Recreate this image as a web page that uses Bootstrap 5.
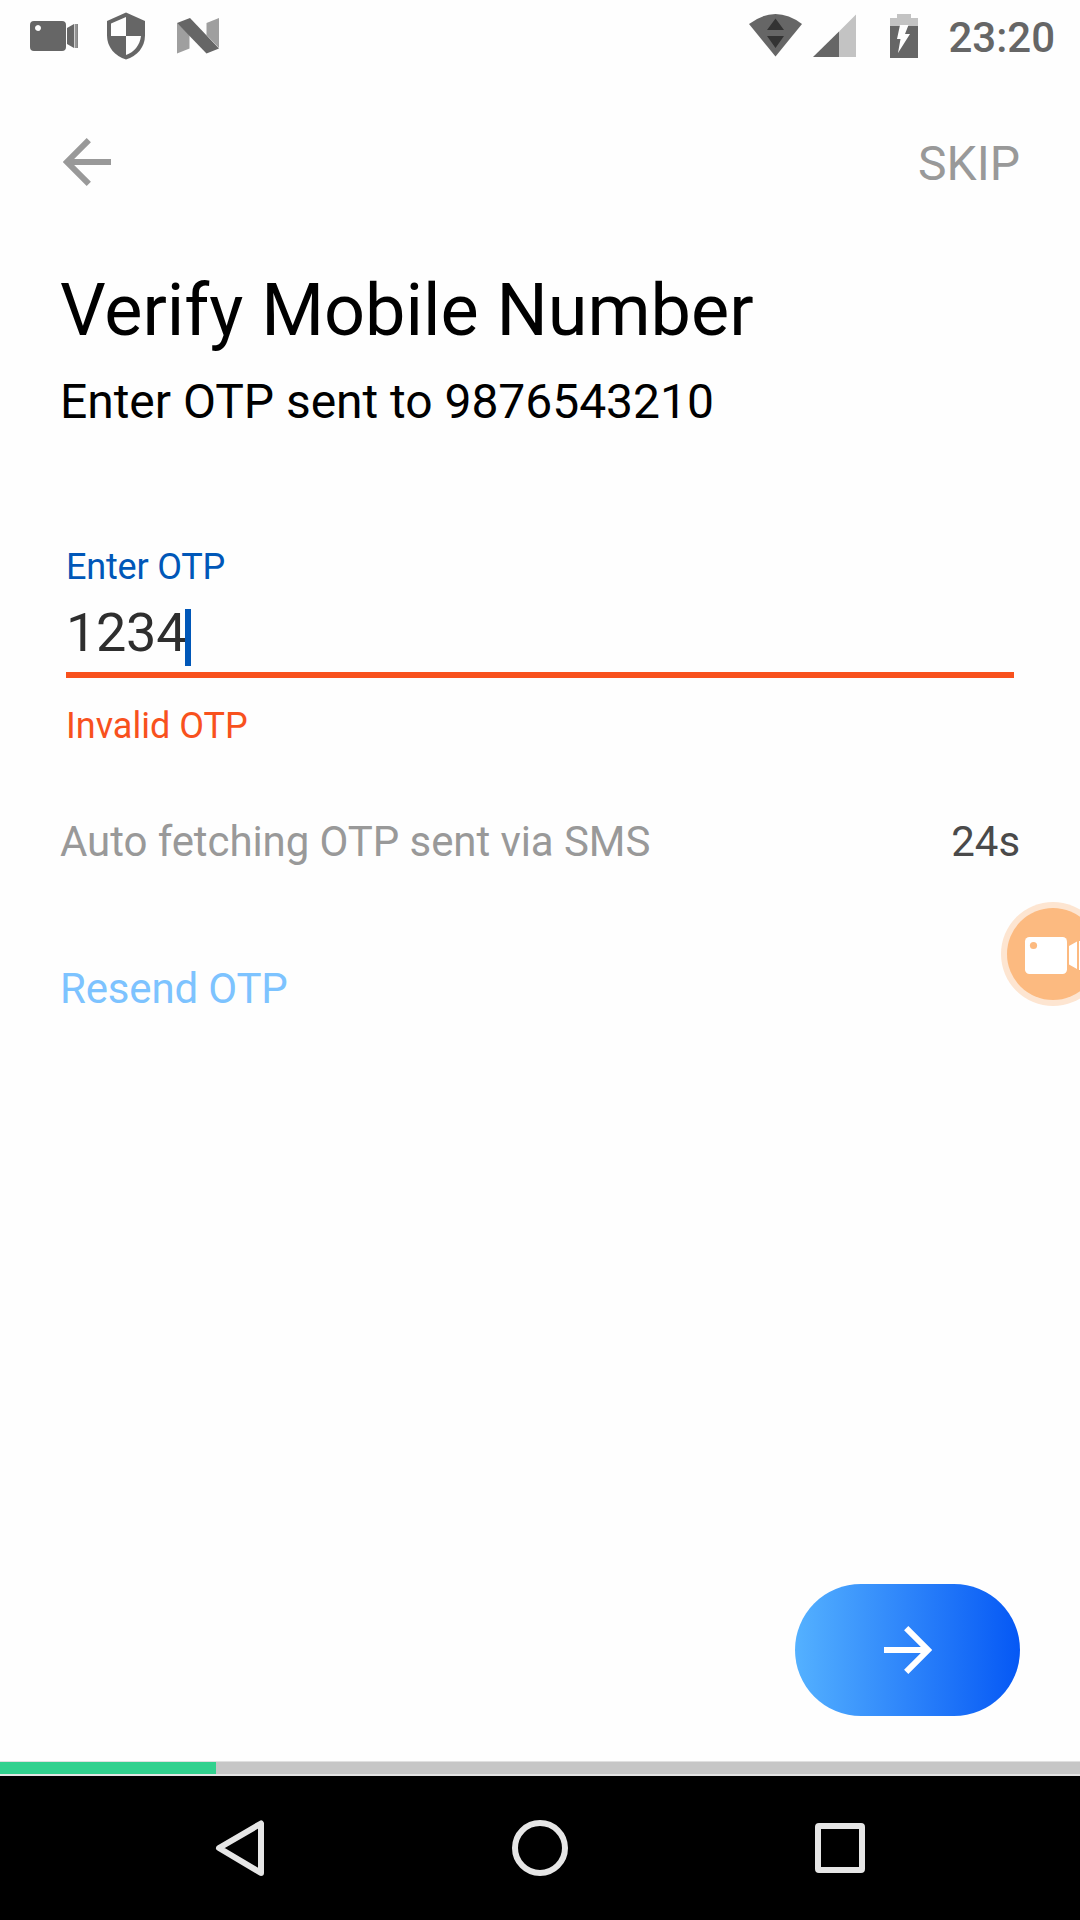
<!DOCTYPE html>
<html lang="en">
<head>
<meta charset="utf-8">
<meta name="viewport" content="width=device-width, initial-scale=1">
<title>Verify Mobile Number</title>
<link href="https://cdn.jsdelivr.net/npm/bootstrap@5.3.0/dist/css/bootstrap.min.css" rel="stylesheet">
<style>
  body { font-family: Roboto, "Noto Sans", sans-serif; background: #fefefe; color: #000; }
  svg { display: block; flex: none; }
  .screen { height: 1920px; }
  .status-bar { height: 72px; padding: 0 25px 0 30px; color: #666; }
  .status-left { gap: 28px; }
  .icon-n { margin-left: 4px; }
  .status-signal { margin-left: 10px; }
  .status-battery { margin-left: 34px; }
  .clock { font-size: 42px; line-height: 50px; font-weight: 500; margin-left: 30px; margin-top: 13px; }
  .content-pad { padding-left: 60px; padding-right: 60px; }
  .toolbar { height: 180px; color: #999; }
  .toolbar .btn { --bs-btn-padding-x: 0; --bs-btn-padding-y: 0; --bs-btn-border-width: 0; --bs-btn-color: #999; }
  .back-btn { margin-top: 66px; margin-left: 3px; height: 48px; }
  .toolbar .skip-btn { font-size: 48px; line-height: 56px; margin-top: 64px; }
  .heading { font-size: 72px; line-height: 84px; margin-top: 17px; font-weight: 400; letter-spacing: -.02px; }
  .subheading { font-size: 48px; line-height: 56px; margin-top: 21px; letter-spacing: -.04px; }
  .otp-field { margin: 116px 6px 0; }
  .otp-label { font-size: 36px; line-height: 42px; color: #0057b8; letter-spacing: -.2px; }
  .otp-value { height: 90px; border-bottom: 6px solid #f8511d; font-size: 54px; line-height: 64px; letter-spacing: -.3px; color: #2e2e2e; }
  .otp-digits { padding-top: 13px; }
  .otp-caret { width: 6px; height: 57px; background: #0057b8; margin-top: 21px; margin-left: -1px; }
  .otp-error { font-size: 36px; line-height: 42px; color: #f8511d; margin-top: 27px; }
  .fetch-row { font-size: 42px; line-height: 50px; margin-top: 70px; color: #999; letter-spacing: -.08px; }
  .timer { color: #4a4a4a; }
  .resend { font-size: 42px; line-height: 50px; margin-top: 97px; color: #7dc3ff; letter-spacing: -.16px; }
  .next-btn { width: 225px; height: 132px; margin-bottom: 45px; background: linear-gradient(90deg, #54b1ff 0%, #2d84fa 50%, #0558f5 100%); }
  .step-progress { height: 15px; border-radius: 0; border-top: 1px solid #e0e0e0; border-bottom: 2px solid #e4e4e4; background: #c6c6c6; }
  .step-progress .progress-bar { background: #31d18e; }
  .nav-keys { height: 144px; gap: 240px; }
  .recorder { width: 104px; height: 104px; left: 1001px; top: 902px; border-radius: 50%; }
</style>
</head>
<body>
<div class="screen d-flex flex-column position-relative overflow-hidden">

  <header class="status-bar d-flex justify-content-between">
    <div class="status-left d-flex">
      <svg width="49" height="72" viewBox="30 0 49 72" fill="#666">
        <path fill-rule="evenodd" d="M34 21h28a4 4 0 0 1 4 4v22a4 4 0 0 1-4 4H34a4 4 0 0 1-4-4V25a4 4 0 0 1 4-4zm4 4a3 3 0 1 0 .01 0z"/>
        <path d="M67 28l7-4v24l-7-4zM74.700 24h1v24h-1zM76.300 24h1.500v24h-1.500z"/>
      </svg>
      <svg width="38" height="72" viewBox="107 0 38 72">
        <path fill="#666" d="M126 12.500l19 8.500v14.500c0 11.500-8 21-19 24-11-3-19-12.500-19-24V21z"/>
        <path fill="#fefefe" d="M126 17v19h-15V23.500zM126 36h15c-1 9-7 16.500-15 19z"/>
      </svg>
      <svg class="icon-n" width="42" height="72" viewBox="177 0 42 72">
        <path fill="#9f9f9f" d="M177 23l12.500 12v13.500L177 53.500zM206.500 23L219 18v30l-12.500-13z"/>
        <path fill="#666" d="M177 23l13-5 29 30.500-12.500 5z"/>
      </svg>
    </div>
    <div class="d-flex">
      <svg width="54" height="72" viewBox="749 0 54 72">
        <path fill="#666" d="M749 24q26.500-20 53 0L775.500 56.500z"/>
        <path fill="#333" d="M775.500 18.500l8.500 11.500h-17zM767 36h17l-8.500 12z"/>
      </svg>
      <svg class="status-signal" width="43" height="72" viewBox="813 0 43 72">
        <path fill="#c3c3c3" d="M856 14.500V57h-17V31.500z"/>
        <path fill="#666" d="M839 31.500V57h-26z"/>
      </svg>
      <svg class="status-battery" width="28" height="72" viewBox="890 0 28 72">
        <path fill="#c3c3c3" d="M897 14h14v4h7v8h-28v-8h7z"/>
        <path fill="#666" d="M890 26h28v32h-28z"/>
        <path fill="#fefefe" d="M900 25h8.500l-3.500 9h5L898 53l2.500-14h-3.500z"/>
      </svg>
      <span class="clock">23:20</span>
    </div>
  </header>

  <main class="content-pad d-flex flex-column flex-grow-1">
    <div class="toolbar d-flex justify-content-between align-items-start">
      <button type="button" class="btn back-btn" aria-label="Back">
        <svg width="48" height="48" viewBox="0 0 48 48" fill="none" stroke="#999" stroke-width="6">
          <path d="M48 24H5M25.800 2.200L4 24l21.800 21.800"/>
        </svg>
      </button>
      <button type="button" class="btn skip-btn">SKIP</button>
    </div>

    <h1 class="heading mb-0">Verify Mobile Number</h1>
    <p class="subheading mb-0">Enter OTP sent to 9876543210</p>

    <div class="otp-field">
      <div class="otp-label">Enter OTP</div>
      <div class="otp-value d-flex">
        <span class="otp-digits">1234</span><span class="otp-caret"></span>
      </div>
      <div class="otp-error">Invalid OTP</div>
    </div>

    <div class="fetch-row d-flex justify-content-between">
      <span>Auto fetching OTP sent via SMS</span>
      <span class="timer">24s</span>
    </div>
    <div class="resend">Resend OTP</div>

    <button type="button" class="btn next-btn rounded-pill border-0 p-0 mt-auto align-self-end d-flex align-items-center justify-content-center" aria-label="Next">
      <svg width="48" height="48" viewBox="0 0 48 48" fill="none" stroke="#fff" stroke-width="6">
        <path d="M0 24h43M22.200 2.200L44 24 22.200 45.800"/>
      </svg>
    </button>
  </main>

  <div class="progress step-progress">
    <div class="progress-bar" style="width:20%"></div>
  </div>

  <nav class="nav-keys bg-black d-flex justify-content-center align-items-center">
    <svg width="60" height="60" viewBox="210 1818 60 60" fill="none" stroke="#e6e6e6" stroke-width="6" stroke-linejoin="round">
      <path d="M261 1823.500v49.500L219 1848z"/>
    </svg>
    <svg width="60" height="60" viewBox="0 0 60 60" fill="none" stroke="#e6e6e6" stroke-width="6">
      <circle cx="30" cy="30" r="25"/>
    </svg>
    <svg width="60" height="60" viewBox="0 0 60 60" fill="none" stroke="#e6e6e6" stroke-width="6" stroke-linejoin="round">
      <rect x="8" y="8" width="44" height="44" rx="1"/>
    </svg>
  </nav>

  <!-- Floating screen-recorder bubble, partly past the right edge -->
  <div class="recorder position-absolute">
    <svg width="104" height="104" viewBox="1001 902 104 104">
      <circle cx="1053" cy="954" r="52" fill="#fde5d1"/>
      <circle cx="1053" cy="954" r="46" fill="#fcba80"/>
      <rect x="1025" y="937" width="42" height="37" rx="4.500" fill="#fff"/>
      <circle cx="1033.500" cy="945.500" r="3.600" fill="#fcba80"/>
      <path fill="#fff" d="M1069 946l8-4.500v27.500l-8-4.500zM1079 941h3v29h-3z"/>
    </svg>
  </div>
</div>
<script src="https://cdn.jsdelivr.net/npm/bootstrap@5.3.0/dist/js/bootstrap.bundle.min.js"></script>
</body>
</html>
